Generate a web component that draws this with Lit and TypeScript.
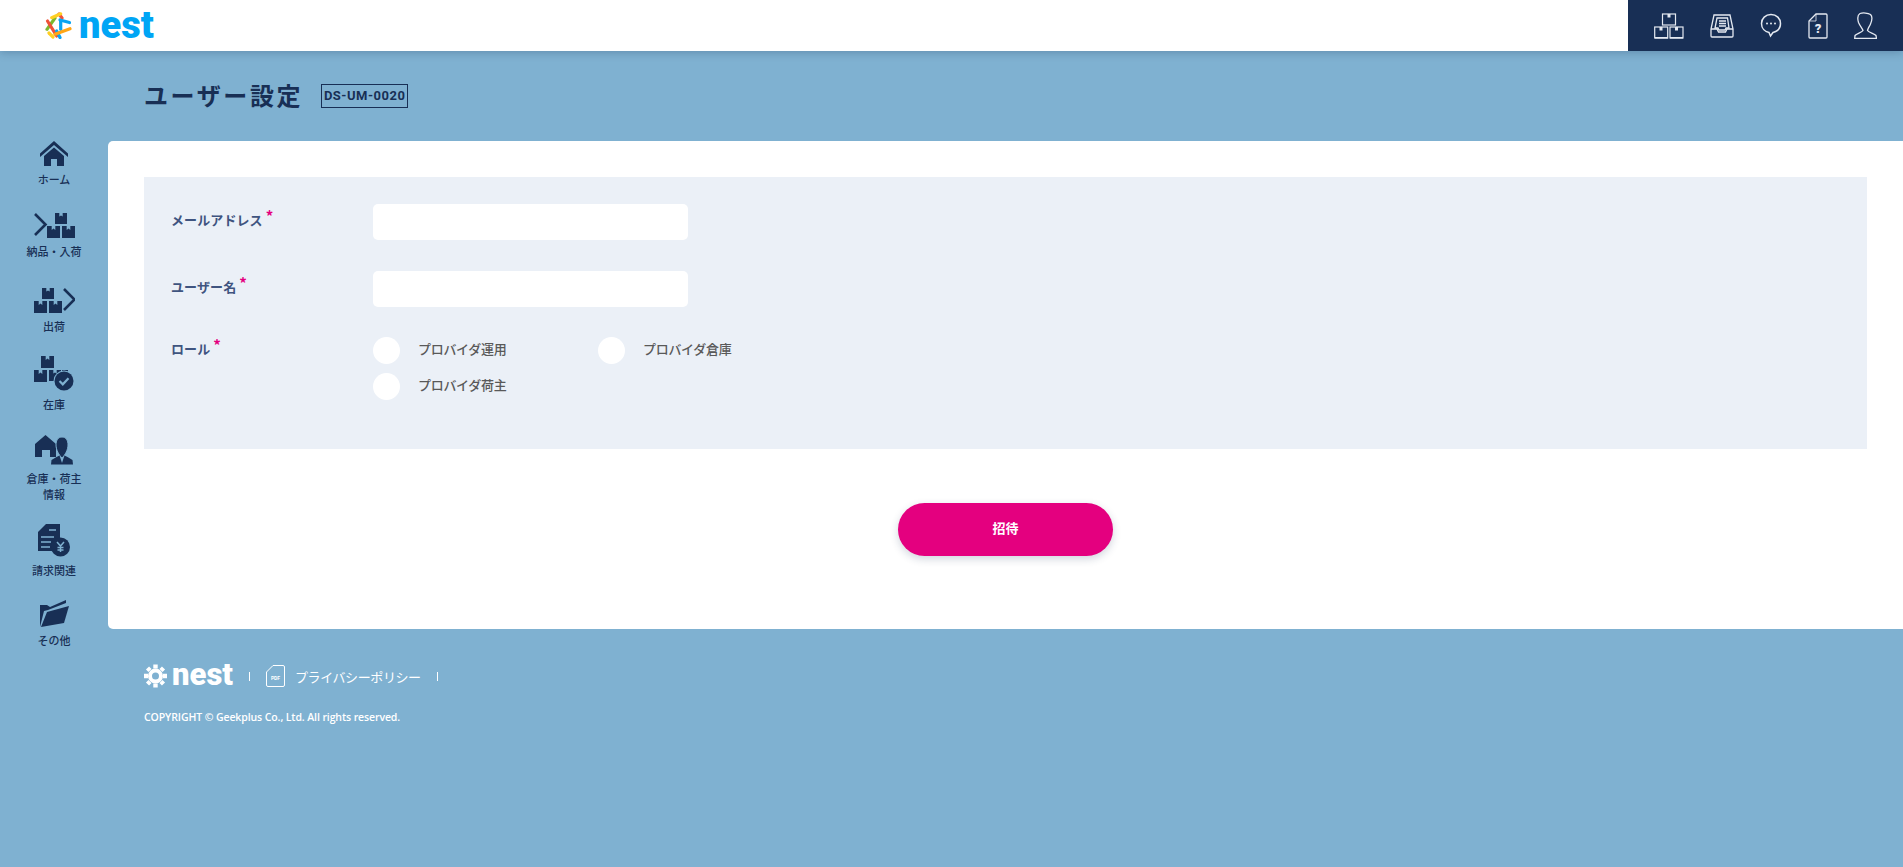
import { LitElement, html, css, svg } from "lit";
import { customElement } from "lit/decorators.js";

const box = (x: number, y: number, s: number) => svg`<path d="M${x} ${y}h${s * 0.36}v${s * 0.3}l${s * 0.14} -${s * 0.1} ${s * 0.14} ${s * 0.1}v-${s * 0.3}h${s * 0.36}v${s * 0.92}h-${s}z"/>`;

const navIcons: Record<string, any> = {
  home: svg`<svg viewBox="0 0 28 25" width="28" height="25"><path d="M14 0 28 12.500v3.500L14 4 0 16v-3.500z"/><path d="M14 6.500 24 15v10h-7v-7h-6v7H4V15z"/></svg>`,
  inbound: svg`<svg viewBox="0 0 41 25" width="41" height="25"><path d="M1 1l10.500 10.500L1 22" fill="none" stroke="currentColor" stroke-width="2.600"/>${box(21, 0, 12)}${box(13, 13, 13)}${box(28, 13, 13)}</svg>`,
  outbound: svg`<svg viewBox="0 0 41 25" width="41" height="25"><path d="M30 1l10.500 10.500L30 22" fill="none" stroke="currentColor" stroke-width="2.600"/>${box(8, 0, 12)}${box(0, 13, 13)}${box(15, 13, 13)}</svg>`,
  stock: svg`<svg viewBox="0 0 40 35" width="40" height="35"><g>${box(7, 0, 13)}${box(0, 14, 13)}${box(15, 14, 12)}<path d="M28 14h6v6h-6z"/></g><circle cx="30" cy="25" r="10.500" fill="#7fb1d1"/><circle cx="30" cy="25" r="9.500"/><path d="M25.500 25l3.300 3.300 5.700-6" fill="none" stroke="#7fb1d1" stroke-width="2.200"/></svg>`,
  owner: svg`<svg viewBox="0 0 38 30" width="38" height="30"><path d="M10.500 0 21 9v13h-6v-7H7v7H0V9z"/><path d="M27 2c4 0 6 3.500 6 8 0 5-3 10-6 13-3-3-6-8-6-13 0-4.500 2-8 6-8z" stroke="#7fb1d1" stroke-width="1"/><path d="M21.500 22l3-1.500L27 28l2.500-7.500 3 1.500 5 3 .5 4.500H16l.5-4.500z"/></svg>`,
  bill: svg`<svg viewBox="0 0 32 33" width="32" height="33"><path d="M8 0h14v15a10 10 0 0 0-7.500 12H0V8z"/><circle cx="22.500" cy="23" r="9.500"/><path d="M3 13h13M3 18h10M3 23h9M11 6h7" stroke="#7fb1d1" stroke-width="1.400"/><path d="M19 18l3.500 4 3.500-4M22.500 22v6M19.500 23.500h6M19.500 26h6" fill="none" stroke="#7fb1d1" stroke-width="1.500"/></svg>`,
  folder: svg`<svg viewBox="0 0 29 27" width="29" height="27"><path d="M0 5h7l3 2 16-7v3L8 10 4 11 0 27z"/><path d="M7 12 29 6l-5 17L1 27z"/></svg>`,
};

const nav = [
  { gap: 0, icon: "home", label: ["ホーム"], h: 25 },
  { gap: 26, icon: "inbound", label: ["納品・入荷"], h: 25 },
  { gap: 29, icon: "outbound", label: ["出荷"], h: 25 },
  { gap: 22, icon: "stock", label: ["在庫"], h: 35 },
  { gap: 23, icon: "owner", label: ["倉庫・荷主", "情報"], h: 30 },
  { gap: 22, icon: "bill", label: ["請求関連"], h: 33 },
  { gap: 22, icon: "folder", label: ["その他"], h: 27 },
];

const ink = "#e4e9f1";
const topIcons = [
  svg`<svg viewBox="0 0 30 26" width="30" height="26"><g fill="none" stroke=${ink} stroke-width="1.200"><rect x="8.500" y="1" width="13" height="11"/><rect x=".7" y="14" width="13" height="11"/><rect x="16" y="14" width="13" height="11"/></g><path fill=${ink} d="M13.500 1h3v3.500h-3zM5.500 14h3v3.500h-3zM21 14h3v3.500h-3zM1 24h13v1.500H1zM16 24h13v1.500H16z"/></svg>`,
  svg`<svg viewBox="0 0 24 24" width="24" height="24" fill="none" stroke=${ink} stroke-width="1.300"><path d="M4 1h16l3 14v7a1 1 0 0 1-1 1H2a1 1 0 0 1-1-1v-7z"/><path d="M1 15h6l1.500 3h7l1.500-3h6"/><path d="M7 4h10.500l1.500 10H16l-1 2H9l-1-2H5z"/><path d="M9 7h7M9 9.500h7M9 12h7"/></svg>`,
  svg`<svg viewBox="0 0 22 25" width="22" height="25" fill="none" stroke=${ink} stroke-width="1.500"><path d="M11 1.500c5.500 0 9.500 4 9.500 9 0 5-3.500 8-7.500 9l-2.500 3.500-1.500-3.500c-4-.8-7.500-4-7.500-9 0-5 4-9 9.500-9z"/><g fill=${ink} stroke="none"><circle cx="7" cy="10.500" r="1"/><circle cx="11" cy="10.500" r="1"/><circle cx="15" cy="10.500" r="1"/></g></svg>`,
  svg`<svg viewBox="0 0 20 26" width="20" height="26" fill="none" stroke=${ink} stroke-width="1.300"><path d="M8 1h10a1 1 0 0 1 1 1v22a1 1 0 0 1-1 1H2a1 1 0 0 1-1-1V8z"/><path d="M8 1v7H1" stroke-width=".8"/><text x="10" y="20" text-anchor="middle" font-family="Roboto, sans-serif" font-weight="900" font-size="13" fill=${ink} stroke="none">?</text></svg>`,
  svg`<svg viewBox="0 0 23 27" width="23" height="27" fill="none" stroke=${ink} stroke-width="1.300"><path d="M6 1.500c3-1 8-.5 10.500 1 2 2 1.500 6 0 9.500-1 2.500-2.500 4-3 6.500 1 2 7 3 8.500 5l.5 3H.7l.3-3c1.500-2 7-3 8-5-.5-2-3-4.500-4.500-8C3.500 7 3.500 3 6 1.500z"/></svg>`,
];

const sticks: [string, number, number, number, number][] = [
  ["#ffcf24", 4, 21, 8, 25],
  ["#ef5138", 14, 2, 17, 6],
  ["#7cb82f", 2, 17.300, 10, 6],
  ["#ef5138", 2.500, 9, 11.700, 24],
  ["#08a4f2", 15.700, 9, 15.700, 17.300],
  ["#08a4f2", 15, 8, 24.500, 10.500],
  ["#08a4f2", 11.700, 19, 15, 25.500],
  ["#ffa617", 10, 22.300, 25, 16.700],
  ["#ffcf24", 6.700, 5.700, 15.700, 1.800],
];

@customElement("app-root")
export class AppRoot extends LitElement {
  static styles = css`
    :host {
      display: block;
      min-height: 867px;
      background: #7fb1d1;
      font-family: "Noto Sans CJK JP", "Noto Sans", sans-serif;
      color: #182f55;
      overflow: hidden;
    }
    header {
      height: 51px;
      background: #fff;
      display: flex;
      justify-content: space-between;
      box-shadow: 0 2px 8px rgba(24, 47, 85, 0.25);
      position: relative;
    }
    .brand {
      display: flex;
      align-items: center;
      gap: 7px;
      padding-left: 45px;
    }
    .brand svg { display: block; }
    .logo {
      font-family: Roboto, sans-serif;
      font-weight: 900;
      font-size: 38px;
      line-height: 40px;
      color: #00a5f5;
      padding-bottom: 2px;
    }
    .tools {
      width: 275px;
      background: #182f55;
      display: flex;
      align-items: center;
      padding-left: 26px;
      gap: 26px;
      box-sizing: border-box;
    }
    .tools svg { display: block; }
    .shell { display: flex; align-items: flex-start; }
    nav {
      width: 108px;
      flex: none;
      padding-top: 90px;
      display: flex;
      flex-direction: column;
      align-items: center;
      color: #182f55;
    }
    .item { display: flex; flex-direction: column; align-items: center; }
    .item svg { display: block; fill: currentColor; }
    .item .lbl {
      margin-top: 5px;
      font-size: 11px;
      line-height: 16px;
      font-weight: 500;
      text-align: center;
      white-space: nowrap;
    }
    .item .lbl div { height: 16px; }
    main { flex: 1; min-width: 0; }
    .title {
      height: 90px;
      padding: 0 0 0 36px;
      display: flex;
      align-items: center;
      gap: 18px;
      box-sizing: border-box;
    }
    h1 {
      margin: 0;
      padding-bottom: 2px;
      font-size: 24px;
      font-weight: 700;
      letter-spacing: 2.600px;
      line-height: 32px;
    }
    .code {
      font-family: Roboto, sans-serif;
      font-weight: 700;
      font-size: 13px;
      letter-spacing: 0.500px;
      line-height: 22px;
      border: 1px solid #182f55;
      width: 87px;
      box-sizing: border-box;
      white-space: nowrap;
      text-align: center;
    }
    .card {
      background: #fff;
      border-radius: 5px 0 0 5px;
      padding: 36px 36px 73px;
      display: flex;
      flex-direction: column;
    }
    .panel {
      background: #ebf0f7;
      padding: 27px 28px 49px 27px;
      display: grid;
      grid-template-columns: 202px 1fr;
      row-gap: 31px;
    }
    .panel label {
      font-size: 13px;
      font-weight: 700;
      letter-spacing: 0.100px;
      color: #3f5480;
      display: flex;
      align-items: center;
      height: 36px;
      padding-bottom: 5px;
      box-sizing: border-box;
    }
    .panel label.role { height: 27px; margin-top: -1px; }
    .panel label i {
      font-style: normal;
      font-weight: 700;
      color: #e4007f;
      font-size: 15px;
      line-height: 1;
      margin: -8px 0 0 3px;
    }
    .input {
      width: 315px;
      height: 36px;
      background: #fff;
      border-radius: 5px;
    }
    .radios {
      display: grid;
      grid-template-columns: repeat(2, 225px);
      row-gap: 9px;
      margin-top: -1px;
    }
    .radio {
      display: flex;
      align-items: center;
      gap: 18px;
      font-size: 13px;
      font-weight: 500;
      letter-spacing: -0.300px;
      color: #595959;
    }
    .radio b { width: 27px; height: 27px; border-radius: 50%; background: #fff; flex: none; }
    .radio span { padding-bottom: 5px; }
    .send {
      align-self: center;
      margin-top: 54px;
      width: 215px;
      height: 53px;
      padding-bottom: 4px;
      box-sizing: border-box;
      border-radius: 27px;
      background: #e4007f;
      color: #fff;
      font-size: 13px;
      font-weight: 700;
      display: flex;
      align-items: center;
      justify-content: center;
      box-shadow: 0 3px 8px rgba(24, 47, 85, 0.2);
    }
    footer { padding: 34px 0 0 36px; color: #fff; }
    .links { display: flex; align-items: center; height: 26px; }
    .links svg { display: block; }
    .wordmark {
      font-family: Roboto, sans-serif;
      font-weight: 900;
      font-size: 31px;
      line-height: 26px;
      margin-left: 5px;
      padding-bottom: 3px;
    }
    .sep { width: 1px; height: 9px; background: #fff; }
    .sep.first { margin-left: 16px; }
    .pdf { margin: 0 10px 0 16px; }
    .policy { font-size: 13px; margin-right: 16px; letter-spacing: -0.400px; }
    .copy {
      margin-top: 20px;
      font-family: "Open Sans", sans-serif;
      font-size: 10.500px;
      font-weight: 600;
      line-height: 16px;
      letter-spacing: -0.100px;
    }
  `;

  render() {
    return html`
      <header>
        <div class="brand">
          <svg width="27" height="27" viewBox="0 0 27 27" fill="none" stroke-width="3.200" stroke-linecap="round">
            ${sticks.map(([c, a, b, d, e]) => svg`<line x1=${a} y1=${b} x2=${d} y2=${e} stroke=${c}></line>`)}
          </svg>
          <span class="logo">nest</span>
        </div>
        <div class="tools">${topIcons}</div>
      </header>
      <div class="shell">
        <nav>
          ${nav.map(
            (n) => html`<div class="item" style="margin-top:${n.gap}px">
              <div style="height:${n.h}px">${navIcons[n.icon]}</div>
              <div class="lbl">${n.label.map((l) => html`<div>${l}</div>`)}</div>
            </div>`
          )}
        </nav>
        <main>
          <div class="title">
            <h1>ユーザー設定</h1>
            <span class="code">DS-UM-0020</span>
          </div>
          <section class="card">
            <div class="panel">
              <label>メールアドレス<i>*</i></label>
              <div class="input"></div>
              <label>ユーザー名<i>*</i></label>
              <div class="input"></div>
              <label class="role">ロール<i>*</i></label>
              <div class="radios">
                <div class="radio"><b></b><span>プロバイダ運用</span></div>
                <div class="radio"><b></b><span>プロバイダ倉庫</span></div>
                <div class="radio"><b></b><span>プロバイダ荷主</span></div>
              </div>
            </div>
            <div class="send">招待</div>
          </section>
          <footer>
            <div class="links">
              <svg width="23" height="26" viewBox="0 0 23 26" fill="none" stroke="#fff">
                <g transform="translate(11.500 13)">
                  <circle r="5.500" stroke-width="4"></circle>
                  <path stroke-width="4.400" d="M0-11.500v4M0 7.500v4M-11.500 0h4M7.500 0h4M-8-8l2.500 2.500M5.500 5.500 8 8M8-8 5.500-5.500M-5.500 5.500-8 8"></path>
                </g>
              </svg>
              <span class="wordmark">nest</span>
              <span class="sep first"></span>
              <svg class="pdf" width="19" height="22" viewBox="0 0 19 22" fill="none" stroke="#fff" stroke-width="1">
                <path d="M7 .5h10a1.500 1.500 0 0 1 1.500 1.500v18a1.500 1.500 0 0 1-1.500 1.500H2A1.500 1.500 0 0 1 .5 20V7z"></path>
                <text x="9.500" y="15" text-anchor="middle" font-size="5" font-family="Roboto, sans-serif" font-weight="700" fill="#fff" stroke="none">PDF</text>
              </svg>
              <span class="policy">プライバシーポリシー</span>
              <span class="sep"></span>
            </div>
            <div class="copy">COPYRIGHT © Geekplus Co., Ltd. All rights reserved.</div>
          </footer>
        </main>
      </div>
    `;
  }
}
